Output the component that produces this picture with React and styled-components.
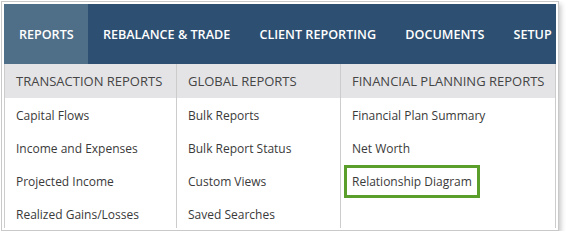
import React from 'react';
import styled, {createGlobalStyle} from 'styled-components';

const GlobalStyle = createGlobalStyle`
    body {
        margin: 1px;
        background: #ffffff;
        font-family: "Open Sans", "Liberation Sans", sans-serif;
    }
`;

const TABS = ['Reports', 'Rebalance & Trade', 'Client Reporting', 'Documents', 'Setup'];

const COLUMNS = [
  {
    title: 'Transaction Reports',
    width: 171,
    items: ['Capital Flows', 'Income and Expenses', 'Projected Income', 'Realized Gains/Losses'],
  },
  {
    title: 'Global Reports',
    width: 163,
    items: ['Bulk Reports', 'Bulk Report Status', 'Custom Views', 'Saved Searches'],
  },
  {
    title: 'Financial Planning Reports',
    width: 214,
    items: ['Financial Plan Summary', 'Net Worth', 'Relationship Diagram'],
    highlight: 'Relationship Diagram',
  },
];

const App = () => {
  return (
    <>
      <GlobalStyle/>
      <Frame>
        <NavBar>
          {TABS.map((tab, i) => (
            <Tab key={tab} $active={i === 0}>{tab}</Tab>
          ))}
        </NavBar>
        <Dropdown>
          {COLUMNS.map((col) => (
            <Column key={col.title} $width={col.width}>
              <ColumnHeader>{col.title}</ColumnHeader>
              <ItemList>
                {col.items.map((item) => (
                  <Item key={item}>
                    <ItemLabel $highlight={item === col.highlight}>{item}</ItemLabel>
                  </Item>
                ))}
              </ItemList>
            </Column>
          ))}
        </Dropdown>
      </Frame>
    </>
  );
};

const Frame = styled.div`
    width: 552px;
    padding: 2px;
    border: 1px solid #c9c9c9;
    background: #ffffff;
    box-shadow: 2px 3px 5px rgba(0, 0, 0, 0.22);
`;

const NavBar = styled.nav`
    display: flex;
    height: 60px;
    overflow: hidden;
    background: #2d5072;
`;

const Tab = styled.div`
    display: flex;
    align-items: center;
    flex-shrink: 0;
    padding: 0 14.3px 0 14.9px;
    background: ${(p) => (p.$active ? '#4f6e87' : 'transparent')};
    color: #ffffff;
    font-size: 12.6px;
    font-weight: 600;
    text-transform: uppercase;
    white-space: nowrap;
`;

const Dropdown = styled.div`
    display: flex;
    border-left: 1px solid #cccccc;
    border-right: 1px solid #cccccc;
`;

const Column = styled.div`
    width: ${(p) => p.$width}px;
    flex-shrink: 0;
    & + & {
        border-left: 1px solid #cccccc;
    }
    &:last-child {
        flex: 1;
    }
`;

const ColumnHeader = styled.div`
    height: 34px;
    display: flex;
    align-items: center;
    padding-left: 11px;
    background: #e4e4e7;
    color: #454545;
    font-size: 13px;
    text-transform: uppercase;
    white-space: nowrap;
`;

const ItemList = styled.ul`
    list-style: none;
    margin: 0;
    padding: 7px 0 4px 11px;
    display: flex;
    flex-direction: column;
    gap: 13px;
`;

const Item = styled.li`
    height: 20px;
    display: flex;
    align-items: center;
    color: #3a3a3a;
    font-size: 12px;
    white-space: nowrap;
`;

const ItemLabel = styled.span`
    ${(p) => p.$highlight && `
        margin: 0 -8px;
        padding: 5px 5px;
        border: 3px solid #5a9f2c;
    `}
`;

export default App;
